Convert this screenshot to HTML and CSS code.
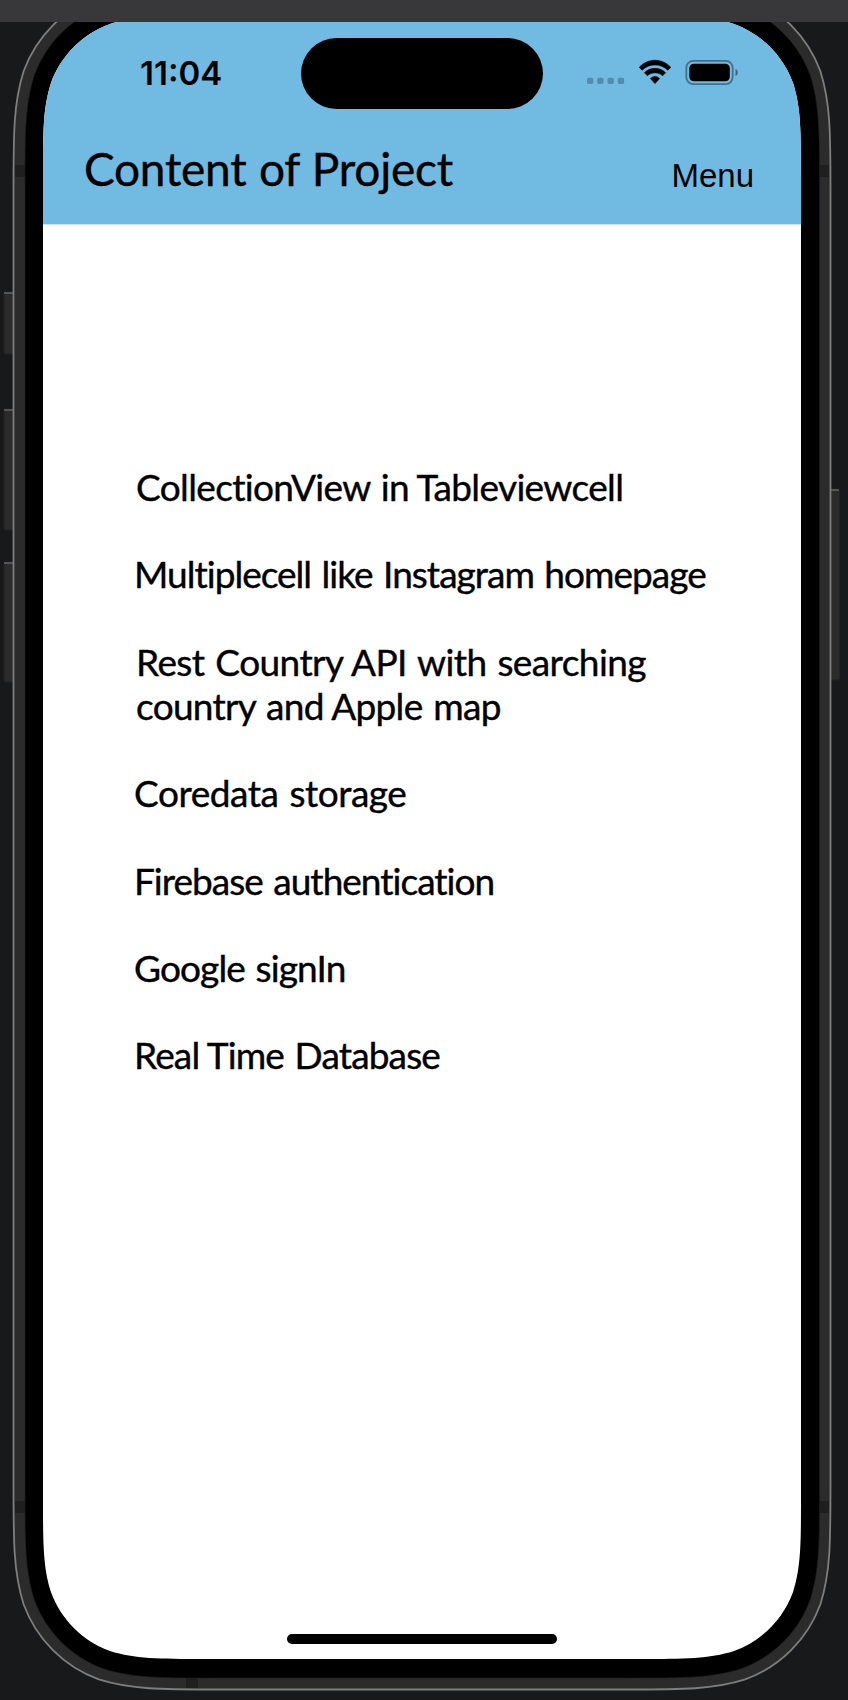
FILE: index.html
```html
<!DOCTYPE html>
<html lang="en">
<head>
<meta charset="utf-8">
<title>Content of Project</title>
<link rel="stylesheet" href="styles.css">
</head>
<body>
<div class="window-bar"></div>
<main class="stage">
  <svg class="frame" viewBox="0 22 848 1678" aria-hidden="true">
    <g class="button">
      <rect x="4" y="292" width="12" height="62" rx="2"/>
      <rect x="4" y="409" width="12" height="121" rx="2"/>
      <rect x="4" y="562" width="12" height="120" rx="2"/>
      <rect x="828" y="489" width="11.5" height="191" rx="2"/>
    </g>
    <path class="button-edge" d="M4 293H13M4 410H13M4 563H13M831 490H839"/>
    <path class="case" d="M219.9-14h404.2c59.5 0 89.2 0 121.15 10.11c34.92 12.71 62.43 40.22 75.14 75.14c10.11 31.95 10.11 61.65 10.11 121.15v1290.7c0 59.5 0 89.2-10.11 121.15c-12.71 34.92-40.22 62.43-75.14 75.14c-31.95 10.11-61.65 10.11-121.15 10.11h-404.2c-59.5 0-89.2 0-121.15-10.11c-34.92-12.71-62.43-40.22-75.14-75.14c-10.11-31.95-10.11-61.65-10.11-121.15v-1290.7c0-59.5 0-89.2 10.11-121.15c12.71-34.92 40.22-62.43 75.14-75.14c31.95-10.11 61.65-10.11 121.15-10.11z"/>
    <path class="antenna" d="M15 165h10v12H15zM820 165h9v12h-9zM15 1501h10v12H15zM820 1501h9v12h-9zM186 1678h12v10h-12z"/>
    <path class="bezel" d="M214.6-3h415.3c54.6 0 81.9 0 111.3 9.29c32.07 11.67 57.34 36.94 69.01 69.01c9.29 29.4 9.29 56.7 9.29 111.3v1301.8c0 54.6 0 81.9-9.29 111.3c-11.67 32.07-36.94 57.34-69.01 69.01c-29.4 9.29-56.7 9.29-111.3 9.29h-415.3c-54.6 0-81.9 0-111.3-9.29c-32.07-11.67-57.34-36.94-69.01-69.01c-9.29-29.4-9.29-56.7-9.29-111.3v-1301.8c0-54.6 0-81.9 9.29-111.3c11.67-32.07 36.94-57.34 69.01-69.01c29.4-9.29 56.7-9.29 111.3-9.29z"/>
  </svg>
  <div class="screen">
    <header class="header">
      <div class="status">
        <span class="time">11:04</span>
        <span class="island"></span>
        <svg class="status-icons" width="154" height="30" viewBox="0 0 154 30" aria-hidden="true">
          <g class="dim">
            <rect x="1" y="19.700" width="6.300" height="6.300" rx="1.8"/>
            <rect x="11.200" y="19.700" width="6.300" height="6.300" rx="1.8"/>
            <rect x="21.500" y="19.700" width="6.300" height="6.300" rx="1.8"/>
            <rect x="31.800" y="19.700" width="6.300" height="6.300" rx="1.8"/>
          </g>
          <path d="M53.200 9.300C62-.1 76-.1 84.800 9.300L81.800 12.200C75 5.200 63 5.200 56.200 12.200zM58.400 14.700C64 8.900 74 8.900 79.600 14.700L76.600 17.700C72.500 13.900 65.500 13.900 61.400 17.700zM64.400 20.600C67 17.800 71 17.800 73.600 20.600L69 25.600z" stroke="#000" stroke-width=".6" stroke-linejoin="round"/>
          <rect class="battery" x="100.300" y="2.900" width="46.400" height="23.200" rx="7"/>
          <rect x="103.300" y="5.700" width="40.500" height="17.500" rx="4.500"/>
          <path class="tip" d="M149.500 11C152.600 12 152.600 17 149.500 18z"/>
        </svg>
      </div>
      <div class="nav">
        <h1 class="title">Content of Project</h1>
        <span class="menu">Menu</span>
      </div>
    </header>
    <ul class="list">
      <li class="item collection">CollectionView in<span class="tight"> </span>Tableviewcell</li>
      <li class="item multiple">Multiplecell like Instagram homepage</li>
      <li class="item country"><span class="country-top">Rest Country<span class="tight"> </span>API with searching</span><br><span class="country-end">country and<span class="tight"> </span>Apple map</span></li>
      <li class="item coredata">Coredata storage</li>
      <li class="item firebase">Firebase authentication</li>
      <li class="item google">Google signIn</li>
      <li class="item database">Real<span class="tight"> </span>Time Database</li>
    </ul>
    <div class="home"></div>
  </div>
</main>
</body>
</html>
```
FILE: styles.css
```css
* { box-sizing: border-box; }
body {
  margin: 0;
  width: 848px;
  height: 1700px;
  overflow: hidden;
  background: #18191a;
  color: #000;
  font-family: Lato, "Liberation Sans", sans-serif;
}
.window-bar { height: 22px; background: #38383a; }
.stage { position: relative; height: 1678px; padding: 0 47px 0 43px; }
.frame { position: absolute; inset: 0; width: 848px; height: 1678px; }
.button { fill: #2b2b2b; stroke: #222324; }
.button-edge { fill: none; stroke: #555; stroke-width: 2; }
.case { fill: #2b2b2b; stroke: #7e7e7e; stroke-width: 1.8; }
.antenna { fill: #1f1f1f; }
.bezel { fill: #000; stroke: #1f1f1f; stroke-width: .6; }
.screen {
  position: relative;
  display: flex;
  flex-direction: column;
  height: 1637px;
  background: #fff;
  clip-path: path("M162.04-6h433.92c46.66 0 69.99 0 95.1 7.94c27.42 9.98 49.02 31.58 59 59c7.94 25.11 7.94 48.44 7.94 95.1v1318.92c0 46.66 0 69.99-7.94 95.1c-9.98 27.42-31.58 49.02-59 59c-25.11 7.94-48.44 7.94-95.1 7.94h-433.92c-46.66 0-69.99 0-95.1-7.94c-27.42-9.98-49.02-31.58-59-59c-7.94-25.11-7.94-48.44-7.94-95.1v-1318.92c0-46.66 0-69.99 7.94-95.1c9.98-27.42 31.58-49.02 59-59c25.11-7.94 48.44-7.94 95.1-7.94z");
}
.header { height: 203px; background: #71bbe3; border-bottom: 1px solid #c9e5f4; }
.status {
  display: grid;
  grid-template-columns: 258px 242px 1fr;
  align-items: center;
  padding-top: 15px;
  height: 87px;
}
.time {
  padding: 0 0 1px 97px;
  font: 600 33px/40px Inter, sans-serif;
}
.island { height: 71px; border-radius: 36px; background: #000; }
.status-icons { margin-left: 43px; }
.dim { opacity: .25; }
.battery { fill: none; stroke: #000; stroke-opacity: .4; stroke-width: 1.8; }
.tip { opacity: .45; }
.nav {
  display: flex;
  align-items: flex-start;
  justify-content: space-between;
  padding: 32px 47px 0 41px;
}
.title {
  margin: 0;
  font-size: 46px;
  line-height: 56px;
  font-weight: 400;
  letter-spacing: -.25px;
  word-spacing: 1px;
  -webkit-text-stroke: .4px #000;
}
.menu { padding-top: 15px; font: 33px/40px "Liberation Sans", sans-serif; }
.list {
  flex: 1;
  display: flex;
  flex-direction: column;
  gap: 43.4px;
  margin: 0;
  padding: 240px 0 0 91px;
  list-style: none;
}
.item {
  font-size: 37px;
  line-height: 44px;
  white-space: nowrap;
  word-spacing: 2px;
  -webkit-text-stroke: .4px #000;
}
.collection { padding-left: 2px; letter-spacing: -.64px; }
.multiple { letter-spacing: -.98px; }
.country { padding-left: 2px; }
.country-top { letter-spacing: -.58px; }
.country-end { letter-spacing: -.7px; }
.coredata { letter-spacing: -.46px; }
.firebase { letter-spacing: -.98px; }
.google { letter-spacing: -.87px; }
.database { letter-spacing: -.84px; }
.tight { letter-spacing: -4px; }
.home { width: 270px; height: 10px; margin: 0 auto 15px; border-radius: 5px; background: #000; }
```
